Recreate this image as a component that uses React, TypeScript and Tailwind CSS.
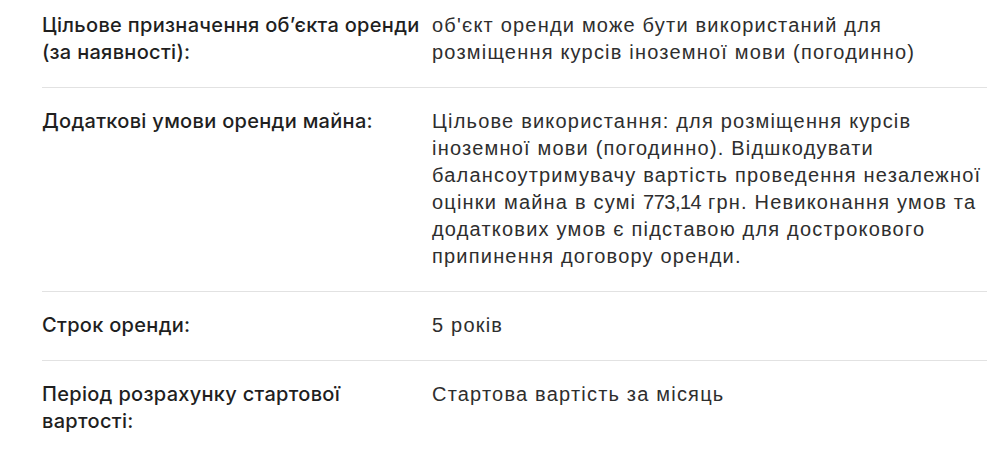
import React from "react";

const rows: { label: React.ReactNode[]; value: React.ReactNode[] }[] = [
  {
    label: ["Цільове призначення об’єкта оренди", "(за наявності):"],
    value: ["об'єкт оренди може бути використаний для", "розміщення курсів іноземної мови (погодинно)"],
  },
  {
    label: ["Додаткові умови оренди майна:"],
    value: [
      "Цільове використання: для розміщення курсів",
      "іноземної мови (погодинно). Відшкодувати",
      "балансоутримувачу вартість проведення незалежної",
      <>
        оцінки майна в сумі <span className="tracking-[-0.5px]">773,14</span> грн. Невиконання умов та
      </>,
      "додаткових умов є підставою для дострокового",
      "припинення договору оренди.",
    ],
  },
  { label: ["Строк оренди:"], value: ["5 років"] },
  { label: ["Період розрахунку стартової", "вартості:"], value: ["Стартова вартість за місяць"] },
];

export default function App() {
  return (
    <div className="w-[997px] h-[452px] overflow-hidden bg-white">
      <div className="ml-[42px] w-[945px] -mt-[8px]">
        {rows.map((r, i) => (
          <div
            key={i}
            className={`grid grid-cols-[390px_1fr] pt-[20px] pb-[21px] ${i < rows.length - 1 ? "border-b border-[#e2e2e2]" : ""}`}
          >
            <div
              className="text-[20px] leading-[27px] font-medium tracking-[0.3px] text-[#1f1f1f] whitespace-nowrap"
              style={{ fontFamily: "Inter, 'Noto Sans', sans-serif" }}
            >
              {r.label.map((l, j) => (
                <div key={j}>{l}</div>
              ))}
            </div>
            <div
              className="text-[20px] leading-[27px] tracking-[1.2px] text-[#2e2e2e] whitespace-nowrap"
              style={{ fontFamily: "'Liberation Sans', Arial, sans-serif" }}
            >
              {r.value.map((l, j) => (
                <div key={j}>{l}</div>
              ))}
            </div>
          </div>
        ))}
      </div>
    </div>
  );
}
